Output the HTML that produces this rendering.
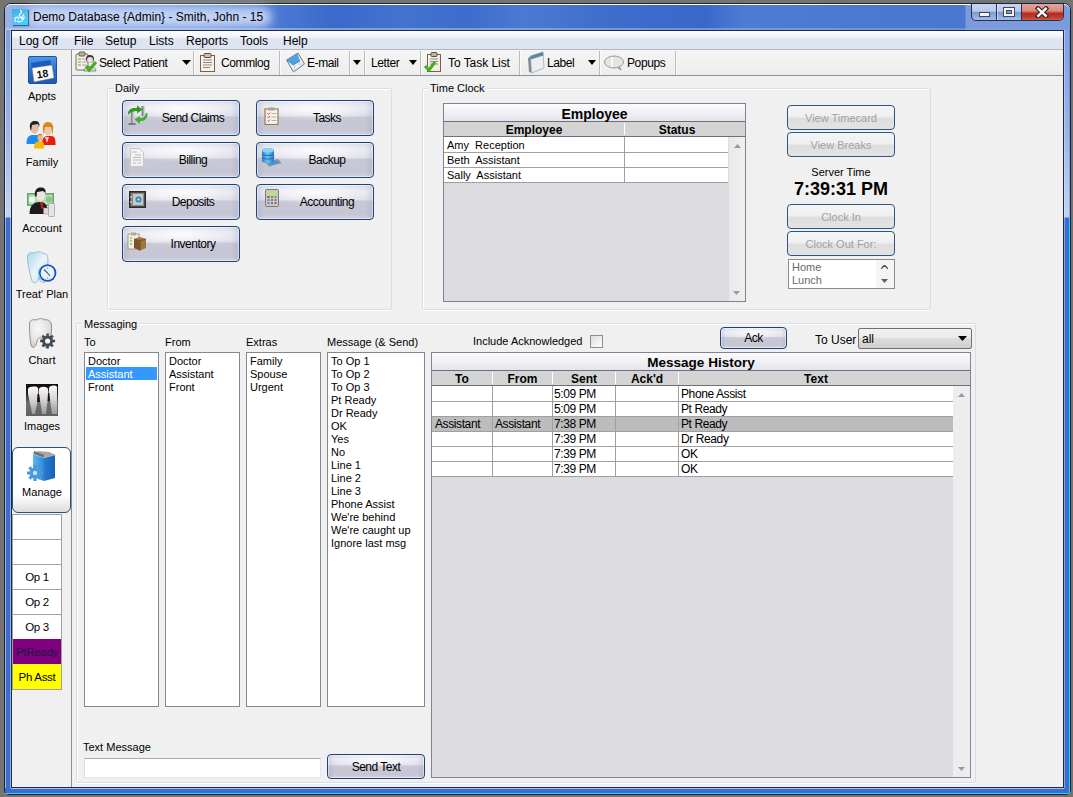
<!DOCTYPE html>
<html><head><meta charset="utf-8">
<style>
*{box-sizing:border-box;margin:0;padding:0}
html,body{width:1073px;height:797px;overflow:hidden}
body{background:#747472;font-family:"Liberation Sans",sans-serif;font-size:11px;color:#000;position:relative}
.a{position:absolute}
.t{position:absolute;white-space:nowrap;line-height:13px}
#outer{left:4px;top:3px;width:1067px;height:792px;border-radius:7px 7px 4px 4px;background:linear-gradient(90deg,#9bb5e6 0,#7d9ee0 25%,#4272d3 35%,#3f6dcf 60%,#5585da 80%,#6f98e0 100%);border:1px solid #1a2540}
#client{left:11px;top:30px;width:1053px;height:758px;background:#f0f0f0;border:1px solid #1e2b45}
.menu{left:12px;top:31px;width:1051px;height:19px;background:linear-gradient(#fbfcfe 0,#f3f5fa 30%,#dfe5f1 45%,#dde3f0 100%);border-bottom:1px solid #b4b8c2}
.menu span{position:absolute;top:3px;font-size:12px;line-height:15px}
.tb{left:72px;top:50px;width:991px;height:26px;background:linear-gradient(#f6f5f5,#eeeded);border-bottom:1px solid #8a8e96}
.tbsep{position:absolute;top:51px;width:2px;height:24px;background:linear-gradient(90deg,#bcbcbc 50%,#fafafa 50%)}
.tbt{position:absolute;top:56px;font-size:12px;letter-spacing:-.4px;line-height:14px}
.sb{left:12px;top:50px;width:60px;height:737px;background:#f0f0f0;border-right:1px solid #8f8f8f}
.sbl{position:absolute;width:60px;text-align:center;font-size:11px;line-height:13px;left:12px}
.gb{position:absolute;border:1px solid #d5dfe5;border-radius:2px;box-shadow:inset 1px 1px 0 #fff,0 1px 0 #fff}
.gbt{position:absolute;background:#f0f0f0;padding:0 2px;font-size:11px;line-height:13px}
.btn{position:absolute;border:1px solid #1c4478;border-radius:4px;background:radial-gradient(ellipse 55% 35% at 50% 22%,rgba(255,255,255,.9),rgba(255,255,255,0) 100%),linear-gradient(90deg,rgba(140,140,170,.22) 0,rgba(0,0,0,0) 7%,rgba(0,0,0,0) 93%,rgba(140,140,170,.22) 100%),linear-gradient(#d8d8e6 0,#e4e4ee 18%,#dedeea 44%,#c8c8d6 47%,#c5c5d3 85%,#d2d2e0 100%);box-shadow:inset 0 0 0 1px rgba(255,255,255,.45);font-size:12px;letter-spacing:-.5px;line-height:14px;text-align:center}
.btn2{position:absolute;border:1px solid #2f5583;border-radius:4px;background:linear-gradient(#f4f4f4 0,#f0f0f0 45%,#dedede 55%,#e3e3e3 100%);font-size:11px;line-height:14px;text-align:center;color:#a2a2a2}
.lb{position:absolute;background:#fff;border:1px solid #828790}
.lb div{height:13px;line-height:14px;padding-left:3px;font-size:11px;white-space:nowrap}
.bt{position:absolute;left:24px;right:0;top:10px;font-size:12px;letter-spacing:-.5px;text-align:center;white-space:nowrap}
.bt2{position:absolute;left:0;right:0;top:5px;text-align:center;white-space:nowrap}
</style></head><body>
<div class="a" style="left:4px;top:3px;width:1067px;height:792px;border-radius:7px 7px 5px 5px;background:linear-gradient(#88a4de 0,#86a2de 40px,#9ab2e4 120px,#c4d2f0 213px,#3d6ccc 214px,#3d6ccc 100%);border:1px solid #1a2238"></div>
<!-- title bar -->
<div class="a" style="left:5px;top:4px;width:1065px;height:26px;border-radius:6px 6px 0 0;border-top:1px solid #fbfdff;background:linear-gradient(90deg,#9cb2e4 0,#8eaae2 30px,#7096dc 200px,#4a78d2 275px,#3b69ca 330px,#4373cf 400px,#3d6ccc 460px,#4b79d2 520px,#3f6dcc 600px,#3a68c9 700px,#4e7cd3 740px,#4a78d0 900px,#4a78d0 960px,#7b9bdb 961px,#7b9bdb 100%)"></div>
<div class="a" style="left:5px;top:28px;width:1065px;height:2px;background:linear-gradient(90deg,rgba(190,210,245,.6),rgba(120,160,230,.6))"></div>
<div class="a" style="left:26px;top:7px;width:246px;height:20px;border-radius:10px;background:rgba(206,220,248,.88);filter:blur(5px)"></div>
<!-- side frames -->
<div class="a" style="left:5px;top:30px;width:1px;height:758px;background:rgba(255,255,255,.5)"></div>
<div class="a" style="left:1069px;top:30px;width:1px;height:188px;background:linear-gradient(#5a8ae8,#8ab0f0)"></div><div class="a" style="left:1069px;top:218px;width:1px;height:575px;background:#2ad0ff"></div><div class="a" style="left:10px;top:30px;width:1px;height:758px;background:rgba(220,235,255,.55)"></div><div class="a" style="left:1064px;top:30px;width:1px;height:758px;background:rgba(220,235,255,.45)"></div>
<div class="a" style="left:5px;top:793px;width:1064px;height:1px;background:#2ad0ff"></div>
<div class="a" style="left:11px;top:788px;width:1053px;height:1px;background:#a8c0ee"></div>
<!-- title icon -->
<div class="a" style="left:12px;top:9px;width:16px;height:16px;background:linear-gradient(160deg,#3aa8e8 0,#58c4f0 50%,#30d8f8 100%);box-shadow:1px 1px 1px rgba(0,0,40,.5)"></div>
<svg class="a" style="left:12px;top:9px" width="16" height="16" viewBox="0 0 16 16"><path d="M4 13 C2 10 3 8 5 8 L7 10 M8 1 C10 2 10 4 8 5 M8 5 C6 7 8 9 10 8 L12 5 M5 12 C8 14 11 12 12 9 M9 10 L13 8" stroke="#fff" stroke-width="1.1" fill="none"/></svg>
<div class="t" style="left:33px;top:10px;font-size:12px;line-height:15px;color:#000">Demo Database {Admin} - Smith, John - 15</div>
<!-- caption buttons -->
<div class="a" style="left:971px;top:4px;width:93px;height:17px;border:1px solid #243250;border-top:none;border-radius:0 0 5px 5px;overflow:hidden;background:linear-gradient(#c8d5ef 0,#b8c9ec 45%,#7f9ad4 52%,#8fa8dc 75%,#a8bce6 100%)">
 <div class="a" style="left:24px;top:0;width:1px;height:17px;background:#243250"></div>
 <div class="a" style="left:25px;top:0;width:1px;height:17px;background:rgba(255,255,255,.5)"></div>
 <div class="a" style="left:49px;top:0;width:1px;height:17px;background:#243250"></div>
 <div class="a" style="left:50px;top:0;width:43px;height:17px;background:linear-gradient(#e4a49a 0,#d88c80 40%,#b82c1c 55%,#c04030 80%,#d06a58 100%)"><svg class="a" style="left:13px;top:2px" width="14" height="12" viewBox="0 0 14 12"><path d="M3 2.5 L11 10 M11 2.5 L3 10" stroke="#402828" stroke-width="4.6" stroke-linecap="square"/><path d="M3.3 2.8 L10.7 9.7 M10.7 2.8 L3.3 9.7" stroke="#fafafa" stroke-width="2.4" stroke-linecap="square"/></svg></div>
 <div class="a" style="left:7px;top:8px;width:11px;height:5px;background:#f6f2ee;border:1px solid #404860"></div>
 <div class="a" style="left:31px;top:3px;width:12px;height:10px;border:1px solid #404860;background:#f6f2ee"></div>
 <div class="a" style="left:34px;top:6px;width:6px;height:4px;border:1px solid #404860;background:#7f9ad4"></div>
 </div>
<div id="client" class="a"></div>
<div class="a menu">
<span style="left:7px">Log Off</span>
<span style="left:62px">File</span>
<span style="left:93px">Setup</span>
<span style="left:137px">Lists</span>
<span style="left:174px">Reports</span>
<span style="left:228px">Tools</span>
<span style="left:271px">Help</span>
</div>
<div class="a sb"></div>
<div class="a tb"></div>
<!-- toolbar items -->
<svg class="a" style="left:75px;top:51px" width="22" height="22" viewBox="0 0 22 22">
 <rect x="1" y="3" width="12" height="16" rx="1" fill="#f4efe6" stroke="#7a6a58"/>
 <rect x="4" y="1" width="6" height="4" rx="1" fill="#b8b0a0" stroke="#6a6050"/>
 <path d="M3 8h3M3 11h3M3 14h3" stroke="#58b050" stroke-width="1.2"/>
 <path d="M7 8h4M7 11h4M7 14h4" stroke="#a8a8a8"/>
 <circle cx="15" cy="8" r="4" fill="#3a3a3a"/><circle cx="15" cy="9" r="3" fill="#e8e0d8"/>
 <path d="M9 20 C9 14 21 14 21 20Z" fill="#d8d8d8" stroke="#555" stroke-width=".6"/>
 <path d="M11 15 L14 19 L21 11" stroke="#40b020" stroke-width="3" fill="none"/>
</svg>
<div class="tbt" style="left:99px">Select Patient</div>
<svg class="a" style="left:182px;top:60px" width="9" height="5"><path d="M0 0h9L4.5 5z" fill="#000"/></svg>
<div class="tbsep" style="left:193px"></div>
<svg class="a" style="left:199px;top:52px" width="18" height="21" viewBox="0 0 18 21">
 <rect x="1.5" y="3.5" width="14" height="16" fill="#f6f2ea" stroke="#7a6040"/>
 <rect x="5" y="1.5" width="7" height="4" rx="1" fill="#c8c0b0" stroke="#605040"/>
 <path d="M4 8h9M4 10.5h9M4 13h9M4 15.5h7" stroke="#8a8a8a"/>
</svg>
<div class="tbt" style="left:221px">Commlog</div>
<div class="tbsep" style="left:279px"></div>
<svg class="a" style="left:285px;top:52px" width="21" height="21" viewBox="0 0 21 21">
 <path d="M1.5 8 L13 1 L19.5 12 L8.5 20Z" fill="#eef0f2" stroke="#707880"/>
 <path d="M2 8 L12.5 1.5 L15 9 L8 13Z" fill="#4aa4e4"/>
 <path d="M2 8 L8 13 L15 9" stroke="#3a7ab0" fill="none" stroke-width=".8"/>
 <path d="M8.5 20 L10 13 M19.5 12 L13 12" stroke="#b8c0c8" fill="none" stroke-width=".8"/>
</svg>
<div class="tbt" style="left:307px">E-mail</div>
<div class="tbsep" style="left:349px"></div>
<svg class="a" style="left:353px;top:60px" width="8" height="5"><path d="M0 0h8L4 5z" fill="#000"/></svg>
<div class="tbsep" style="left:364px"></div>
<div class="tbt" style="left:371px">Letter</div>
<svg class="a" style="left:409px;top:60px" width="8" height="5"><path d="M0 0h8L4 5z" fill="#000"/></svg>
<div class="tbsep" style="left:420px"></div>
<svg class="a" style="left:423px;top:51px" width="21" height="22" viewBox="0 0 21 22">
 <rect x="4.5" y="3.5" width="13" height="17" fill="#f2eee4" stroke="#7a6040"/>
 <rect x="8" y="1.5" width="6" height="4" rx="1" fill="#c0b8a8" stroke="#605040"/>
 <path d="M7 8h8M7 10.5h8M7 13h8" stroke="#909090"/>
 <path d="M2 15 L6 19 L12 11" stroke="#40b020" stroke-width="3" fill="none"/>
</svg>
<div class="tbt" style="left:448px;letter-spacing:-.05px">To Task List</div>
<div class="tbsep" style="left:519px"></div>
<svg class="a" style="left:527px;top:51px" width="18" height="23" viewBox="0 0 18 23">
 <path d="M1 7 L4 5 L5 22 L2 21Z" fill="#808890"/>
 <path d="M3.5 5 L16 1 L17 17 L4.5 22Z" fill="#eceef0" stroke="#9aa0a8" stroke-width=".7"/>
 <path d="M3.5 5 L16 1 L16.3 4.5 L3.8 8.5Z" fill="#5a86a8"/>
</svg>
<div class="tbt" style="left:547px">Label</div>
<svg class="a" style="left:588px;top:60px" width="8" height="5"><path d="M0 0h8L4 5z" fill="#000"/></svg>
<div class="tbsep" style="left:599px"></div>
<svg class="a" style="left:603px;top:55px" width="22" height="17" viewBox="0 0 22 17">
 <ellipse cx="11" cy="7" rx="9.5" ry="6" fill="#e4e4e4" stroke="#9a9a9a"/>
 <path d="M14 12 L18 15 L16 11" fill="#e4e4e4" stroke="#8a8a8a"/>
 <path d="M9 2 v10" stroke="#fff" stroke-width="1.5"/>
</svg>
<div class="tbt" style="left:627px">Popups</div>
<div class="tbsep" style="left:675px"></div>
<!-- sidebar -->
<svg class="a" style="left:28px;top:56px" width="29" height="28" viewBox="0 0 29 28">
 <defs><linearGradient id="cal" x1="0" y1="0" x2="0" y2="1"><stop offset="0" stop-color="#4c9ae8"/><stop offset=".5" stop-color="#2a72d0"/><stop offset="1" stop-color="#1c58b0"/></linearGradient></defs>
 <rect x=".5" y=".5" width="28" height="27" rx="1.5" fill="url(#cal)" stroke="#1e50a0"/>
 <path d="M3 7 L22 4 L24 11 L4 14Z" fill="#1a5cc4"/>
 <path d="M4 12 L24 9 L26 22 L6 26Z" fill="#fbfbfb" stroke="#707070" stroke-width=".5"/>
 <text x="8.5" y="21.5" font-family="Liberation Sans" font-weight="bold" font-size="10.5" fill="#111" transform="rotate(-9 15 17)">18</text>
</svg>
<div class="sbl" style="top:90px">Appts</div>
<svg class="a" style="left:26px;top:120px" width="32" height="30" viewBox="0 0 32 30">
 <path d="M0.5 24 C0.5 17 3 15 7 15 L11 15 C14 15 13 19 13 24Z" fill="#1a8cf0"/>
 <ellipse cx="8.5" cy="8" rx="4.3" ry="5.8" fill="#e4bca4"/>
 <path d="M4 8 C3 2 7 0.5 10 1 C13 1.5 14 4 13 7 L12 4 L6 5 L5 11Z" fill="#202020"/>
 <path d="M16 25 C16 18 18 16 22 16 L25 16 C29 16 29.5 19 29.5 25Z" fill="#e81c10"/>
 <path d="M19 17 L21 23 L23 17Z" fill="#fff" opacity=".8"/>
 <ellipse cx="22" cy="10" rx="4" ry="5.2" fill="#ecc8ac"/>
 <path d="M17 11 C16 4 19 2 22 2 C26 2 28 5 27 10 L27 16 L25 7 L19 7 L18 15Z" fill="#d88a18"/>
 <path d="M8 28.5 C8 23 10 21.5 13 21.5 L15 21.5 C18 21.5 18 24 18 28.5Z" fill="#f8b800"/>
 <ellipse cx="14" cy="17.5" rx="2.5" ry="3.5" fill="#e8b890"/>
 <path d="M11.5 17 C11 13 17 13 16.5 17 L15.5 15 L12.5 15Z" fill="#a05a10"/>
</svg>
<div class="sbl" style="top:156px">Family</div>
<svg class="a" style="left:26px;top:186px" width="30" height="32" viewBox="0 0 30 32">
 <rect x="1" y="7" width="27" height="13" fill="#62a862"/>
 <rect x="2.5" y="8.5" width="24" height="10" fill="#b4dab4"/>
 <circle cx="6" cy="13.5" r="3" fill="#f4fbf4"/><circle cx="23" cy="13.5" r="3" fill="#8cc48c"/>
 <path d="M3.5 28 C3.5 19 8 16 14 16 C19 16 22 19 22 28Z" fill="#1c1c1c"/>
 <ellipse cx="14.5" cy="9" rx="4.8" ry="6" fill="#ece6e0"/>
 <path d="M9 10 C8 3 12 1.5 15 1.5 C19 1.5 20 4 19.5 7 L17 5 L11 6 L10.5 11Z" fill="#1a1a1a"/>
 <path d="M14 16 L16.5 16 L17.5 22 L15.5 23Z" fill="#d81818"/>
 <rect x="17.5" y="22" width="5" height="6" fill="#e0d8d0" stroke="#8a8070" stroke-width=".5"/>
 <rect x="22.5" y="17.5" width="6" height="13" rx="1" fill="#e4e4e4" stroke="#9a9a9a" stroke-width=".7"/>
</svg>
<div class="sbl" style="top:222px">Account</div>
<svg class="a" style="left:25px;top:250px" width="34" height="36" viewBox="0 0 34 36">
 <defs><linearGradient id="tth" x1="0" y1="0" x2="1" y2="1"><stop offset="0" stop-color="#a8d8ec"/><stop offset=".5" stop-color="#e8f4f8"/><stop offset="1" stop-color="#c8e4ee"/></linearGradient></defs>
 <path d="M2.5 8 C2 3 6 2 10 3 C13 1 16 1.5 18 3.5 C21 3 23 5 23 10 C23 17 22 24 21 31 C19 34 15 33 14 27 C13 33 9 34 7 31 C5 24 3 16 2.5 8Z" fill="url(#tth)" stroke="#88b4c4" stroke-width=".8"/>
 <circle cx="22.6" cy="23" r="8.8" fill="#2050c0"/>
 <circle cx="22.6" cy="23" r="9" fill="none" stroke="#40c8e8" stroke-width="1" stroke-dasharray="14 60" stroke-dashoffset="-20"/>
 <circle cx="22.6" cy="23" r="7" fill="#e4f4fc"/>
 <path d="M22.6 23 L19 19.5 M22.6 23 L25 26" stroke="#505870" stroke-width="1.1"/>
 <circle cx="22.6" cy="18" r=".6" fill="#c04060"/><circle cx="22.6" cy="28" r=".6" fill="#c04060"/>
</svg>
<div class="sbl" style="top:288px">Treat' Plan</div>
<svg class="a" style="left:28px;top:317px" width="28" height="32" viewBox="0 0 28 32">
 <defs><radialGradient id="tch" cx=".4" cy=".35" r=".7"><stop offset="0" stop-color="#f8f8f8"/><stop offset=".7" stop-color="#e4e0e0"/><stop offset="1" stop-color="#c8c4c4"/></radialGradient></defs>
 <path d="M1.5 8 C1 3 5 2 8 3 C11 1.5 14 0.8 17 3 C20 2 23.5 4 23.5 9 C24 16 22 23 21 29 C19 32 16 31 15 25 C14 20 11 19 9 24 C8 31 4 32 3 28 C2 22 1.5 15 1.5 8Z" fill="url(#tch)" stroke="#7a7a7a" stroke-width=".8"/>
 <g transform="translate(19.6 24)"><circle r="5.6" fill="#505860"/>
 <path d="M0 -7.5V7.5M-7.5 0H7.5M-5.3 -5.3L5.3 5.3M5.3 -5.3L-5.3 5.3" stroke="#404850" stroke-width="2.4"/>
 <circle r="2.6" fill="#f4f4f4"/></g>
</svg>
<div class="sbl" style="top:354px">Chart</div>
<svg class="a" style="left:26px;top:384px" width="32" height="32" viewBox="0 0 32 32">
 <defs><linearGradient id="xr" x1="0" y1="0" x2="0" y2="1"><stop offset="0" stop-color="#120a0a"/><stop offset=".3" stop-color="#282020"/><stop offset=".6" stop-color="#707070"/><stop offset="1" stop-color="#606060"/></linearGradient>
 <linearGradient id="xt" x1="0" y1="0" x2="0" y2="1"><stop offset="0" stop-color="#fafafa"/><stop offset=".45" stop-color="#d8d8d8"/><stop offset="1" stop-color="#9a9a9a"/></linearGradient></defs>
 <rect width="32" height="32" fill="url(#xr)"/>
 <path d="M2 5 C3 2 11 2 12 4 C13 9 12 14 11 20 L9 30 L6 30 C5 22 3 16 2 10Z" fill="url(#xt)"/>
 <path d="M13 5 C14 2 21 2 22 5 C23 10 22 15 21 21 L20 30 L16 30 C15 22 14 16 13 10Z" fill="url(#xt)"/>
 <path d="M23 4 C24 1 30 1 31 3 L31 30 L26 30 C25 22 24 16 23 10Z" fill="url(#xt)"/>
 <path d="M11.5 10 L13 10 L14 18 L11 18Z M22 9 L23.3 9 L24 17 L21.5 17Z" fill="#1a1414"/>
</svg>
<div class="sbl" style="top:420px">Images</div>
<div class="a" style="left:12px;top:447px;width:59px;height:66px;border:1px solid #2b5080;border-radius:6px;background:linear-gradient(#fff 0,#fff 72%,#f4f4f4 82%,#dcdcdc 100%)"></div>
<svg class="a" style="left:26px;top:450px" width="32" height="33" viewBox="0 0 32 33">
 <defs><linearGradient id="mg1" x1="0" x2="1"><stop offset="0" stop-color="#60b8f0"/><stop offset="1" stop-color="#2a88d8"/></linearGradient>
 <linearGradient id="mg2" x1="0" x2="1"><stop offset="0" stop-color="#2a7ad0"/><stop offset="1" stop-color="#1a60b0"/></linearGradient></defs>
 <path d="M7 4 L18 8 L18 31 L7 27Z" fill="url(#mg1)"/>
 <path d="M18 8 L29 5 L29 28 L18 31Z" fill="url(#mg2)"/>
 <path d="M6 3 L12 1 L23 2 L30 5 L18 8Z" fill="#a8a8a8"/>
 <path d="M8 1 L8 4 L18 7.5 L18 5Z" fill="#707070"/>
 <g transform="translate(9 23)"><circle r="5.5" fill="#58a8e8"/>
 <path d="M0 -8V8M-8 0H8M-5.6 -5.6L5.6 5.6M5.6 -5.6L-5.6 5.6" stroke="#4a98dc" stroke-width="3"/>
 <circle r="2.2" fill="#c8e4f8"/></g>
</svg>
<div class="sbl" style="top:486px">Manage</div>
<!-- op list -->
<div class="a" style="left:12px;top:514px;width:50px;height:176px;background:#fff;border:1px solid #a0a0a0;border-top:1px solid #a0a0a0"></div>
<div class="a" style="left:13px;top:539px;width:48px;height:1px;background:#a0a0a0"></div>
<div class="a" style="left:13px;top:564px;width:48px;height:1px;background:#a0a0a0"></div>
<div class="a" style="left:13px;top:589px;width:48px;height:1px;background:#a0a0a0"></div>
<div class="a" style="left:13px;top:614px;width:48px;height:1px;background:#a0a0a0"></div>
<div class="a" style="left:13px;top:639px;width:48px;height:25px;background:#800080"></div>
<div class="a" style="left:13px;top:664px;width:48px;height:25px;background:#ffff00"></div>
<div class="sbl" style="left:12px;width:50px;top:571px;font-size:11.5px;letter-spacing:-.3px">Op 1</div>
<div class="sbl" style="left:12px;width:50px;top:596px;font-size:11.5px;letter-spacing:-.3px">Op 2</div>
<div class="sbl" style="left:12px;width:50px;top:621px;font-size:11.5px;letter-spacing:-.3px">Op 3</div>
<div class="sbl" style="left:12px;width:50px;top:646px;font-size:11.5px;letter-spacing:-.3px;color:#1a1a40">PtReady</div>
<div class="sbl" style="left:12px;width:50px;top:671px;font-size:11.5px;letter-spacing:-.3px">Ph Asst</div>
<!-- Daily -->
<div class="gb" style="left:107px;top:88px;width:285px;height:222px"></div>
<div class="gbt" style="left:113px;top:82px">Daily</div>
<div class="btn" style="left:122px;top:100px;width:118px;height:36px"><span class="bt">Send Claims</span></div>
<div class="btn" style="left:256px;top:100px;width:118px;height:36px"><span class="bt">Tasks</span></div>
<div class="btn" style="left:122px;top:142px;width:118px;height:36px"><span class="bt">Billing</span></div>
<div class="btn" style="left:256px;top:142px;width:118px;height:36px"><span class="bt">Backup</span></div>
<div class="btn" style="left:122px;top:184px;width:118px;height:36px"><span class="bt">Deposits</span></div>
<div class="btn" style="left:256px;top:184px;width:118px;height:36px"><span class="bt">Accounting</span></div>
<div class="btn" style="left:122px;top:226px;width:118px;height:36px"><span class="bt">Inventory</span></div>
<!-- button icons -->
<svg class="a" style="left:127px;top:105px" width="22" height="20" viewBox="0 0 22 20">
 <rect x="3" y="6" width="4" height="13" fill="#c8c8cc"/><rect x="4" y="6" width="1.5" height="13" fill="#8a8a90"/>
 <rect x="1.5" y="18" width="7" height="2" fill="#7a7a80"/>
 <rect x="14" y="1" width="3.5" height="10" fill="#b8b8c0"/><rect x="15" y="1" width="1.2" height="10" fill="#808088"/>
 <path d="M1 9 C1 4 5 2.5 10 3 L10 0.5 L15.5 4.5 L10 8.5 L10 6 C6 6 3.5 7 1 10Z" fill="#2e9a1e"/>
 <path d="M20.5 8 C21 13 18 16.5 13 16 L13 19 L7.5 14.5 L13 11 L13 13 C16 13 18 12 19 8Z" fill="#40b030"/>
</svg>
<svg class="a" style="left:264px;top:107px" width="15" height="18" viewBox="0 0 15 18">
 <rect x="1" y="2" width="13" height="15.5" fill="#f6f2e8" stroke="#9a7a50" stroke-width="1.2"/>
 <rect x="4.5" y="0.5" width="6" height="3" fill="#a8a098"/>
 <path d="M3.5 6.5l1 1 1.5-2M3.5 10l1 1 1.5-2M3.5 13.5l1 1 1.5-2" stroke="#d04040" stroke-width=".9" fill="none"/>
 <path d="M7.5 6.5h5M7.5 10h5M7.5 13.5h5" stroke="#a0a0a0" stroke-width=".8"/>
</svg>
<svg class="a" style="left:130px;top:148px" width="14" height="19" viewBox="0 0 14 19">
 <path d="M.5 .5 h9 l4 4 v14 h-13z" fill="#f2f2f2" stroke="#c8c8c8"/>
 <path d="M2.5 4h4M5 7h6M3 9.5h8M3 12h8M3 15h3M8 15h3" stroke="#b0b0b0" stroke-width=".8"/>
</svg>
<svg class="a" style="left:261px;top:147px" width="21" height="20" viewBox="0 0 21 20">
 <defs><linearGradient id="db" x1="0" x2="1"><stop offset="0" stop-color="#2a80d0"/><stop offset=".45" stop-color="#6cc4f4"/><stop offset="1" stop-color="#2a78c8"/></linearGradient></defs>
 <path d="M4 15 L17 12 L20.5 16 L8 19.5Z" fill="#8890a0"/><path d="M8 16 L16 14 L18 16 L10 18Z" fill="#3a9ae0"/>
 <path d="M1 3.5 C1 0.5 13 0.5 13 3.5 V14 C13 17 1 17 1 14Z" fill="url(#db)"/>
 <ellipse cx="7" cy="3.5" rx="6" ry="2.2" fill="#8ad4f8"/>
 <path d="M1 7 C1 9 13 9 13 7 M1 10.5 C1 12.5 13 12.5 13 10.5" stroke="#1a5aa8" stroke-width=".8" fill="none"/>
</svg>
<svg class="a" style="left:129px;top:191px" width="17" height="17" viewBox="0 0 17 17">
 <rect x=".5" y=".5" width="16" height="16" fill="#4a4a4a" stroke="#2a2a2a"/>
 <rect x="2" y="2" width="13" height="13" fill="#8a8a88"/>
 <rect x="4" y="3" width="10" height="11" fill="#c8c8c0"/>
 <circle cx="9.5" cy="8.5" r="3" fill="#2a8ab8"/><circle cx="9.5" cy="8.5" r="1.2" fill="#a8e0f8"/>
 <path d="M2 5v2M2 10v2" stroke="#e0e0e0" stroke-width="1.2"/>
</svg>
<svg class="a" style="left:265px;top:189px" width="14" height="18" viewBox="0 0 14 18">
 <rect x=".5" y=".5" width="13" height="17" rx="1" fill="#c8c8c8" stroke="#7a7a7a"/>
 <rect x="2" y="2" width="10" height="3.5" fill="#b8e080"/>
 <path d="M2.5 8h2M6 8h2M9.5 8h2M2.5 11h2M6 11h2M9.5 11h2M2.5 14h2M6 14h2" stroke="#6a6a6a" stroke-width="1.6"/>
 <path d="M9.5 14h2" stroke="#d03030" stroke-width="1.6"/><path d="M2.5 8h2" stroke="#c04040" stroke-width="1.6"/>
</svg>
<svg class="a" style="left:127px;top:232px" width="20" height="19" viewBox="0 0 20 19">
 <rect x="1" y="2" width="11" height="15" fill="#f2eee4" stroke="#9a8a70" stroke-width=".8"/>
 <rect x="4" y=".5" width="5" height="3" fill="#b0a898"/>
 <path d="M3 6h2M3 9h2M3 12h2" stroke="#40a040" stroke-width=".9"/>
 <path d="M7 7 L13 5 L19 7 L19 16 L13 18.5 L7 16Z" fill="#a07440"/>
 <path d="M7 7 L13 9 L19 7 M13 9 V18.5" stroke="#6a4a20" stroke-width=".8" fill="none"/>
 <path d="M7 7 L13 9 V18.5 L7 16Z" fill="#7a5428"/>
</svg>
<!-- Time Clock -->
<div class="gb" style="left:422px;top:88px;width:509px;height:222px"></div>
<div class="gbt" style="left:428px;top:82px">Time Clock</div>
<div class="a" style="left:443px;top:103px;width:303px;height:199px;background:#dcdce0;border:1px solid #828294"></div>
<div class="a" style="left:444px;top:104px;width:301px;height:18px;background:linear-gradient(#fcfcfe,#e4e4ec);border-bottom:1px solid #6e6e80"></div>
<div class="t" style="left:444px;top:106px;width:301px;text-align:center;font-size:14px;font-weight:bold;line-height:16px">Employee</div>
<div class="a" style="left:444px;top:122px;width:301px;height:15px;background:#d4d4d4;border-bottom:1px solid #6e6e80"></div>
<div class="a" style="left:624px;top:123px;width:1px;height:12px;background:#8a8a8a;border-right:1px solid #fff"></div>
<div class="t" style="left:444px;top:124px;width:180px;text-align:center;font-size:12px;font-weight:bold">Employee</div>
<div class="t" style="left:626px;top:124px;width:102px;text-align:center;font-size:12px;font-weight:bold">Status</div>
<div class="a" style="left:444px;top:137px;width:284px;height:46px;background:#fff"></div>
<div class="a" style="left:444px;top:152px;width:284px;height:1px;background:#a0a0a0"></div>
<div class="a" style="left:444px;top:167px;width:284px;height:1px;background:#a0a0a0"></div>
<div class="a" style="left:444px;top:182px;width:284px;height:1px;background:#a0a0a0"></div>
<div class="a" style="left:624px;top:137px;width:1px;height:45px;background:#a0a0a0"></div>
<div class="a" style="left:729px;top:137px;width:16px;height:164px;background:linear-gradient(90deg,#e8e8e8,#f0f0f0)"></div>
<svg class="a" style="left:734px;top:144px" width="7" height="4"><path d="M0 4h7L3.5 0z" fill="#9a9a9a"/></svg>
<svg class="a" style="left:733px;top:291px" width="7" height="4"><path d="M0 0h7L3.5 4z" fill="#9a9a9a"/></svg>
<div class="t" style="left:447px;top:139px;white-space:pre">Amy  Reception</div>
<div class="t" style="left:447px;top:154px;white-space:pre">Beth  Assistant</div>
<div class="t" style="left:447px;top:169px;white-space:pre">Sally  Assistant</div>
<div class="btn2" style="left:787px;top:105px;width:108px;height:25px"><span class="bt2">View Timecard</span></div>
<div class="btn2" style="left:787px;top:132px;width:108px;height:25px"><span class="bt2">View Breaks</span></div>
<div class="t" style="left:787px;top:166px;width:108px;text-align:center;font-size:11px">Server Time</div>
<div class="t" style="left:770px;top:180px;width:142px;text-align:center;font-size:18px;font-weight:bold;line-height:19px">7:39:31 PM</div>
<div class="btn2" style="left:787px;top:204px;width:108px;height:25px"><span class="bt2">Clock In</span></div>
<div class="btn2" style="left:787px;top:231px;width:108px;height:25px"><span class="bt2">Clock Out For:</span></div>
<div class="a" style="left:788px;top:259px;width:107px;height:30px;background:#fff;border:1px solid #8c8c8c"></div>
<div class="a" style="left:876px;top:260px;width:18px;height:28px;background:#f4f4f4"></div>
<svg class="a" style="left:881px;top:265px" width="7" height="4"><path d="M0 4L3.5 0L7 4" stroke="#505050" stroke-width="1.3" fill="none"/></svg>
<svg class="a" style="left:881px;top:279px" width="7" height="4"><path d="M0 0h7L3.5 4z" fill="#606060"/></svg>
<div class="t" style="left:792px;top:261px;color:#6a6a6a;font-size:11px;line-height:13px">Home<br>Lunch</div>
<!-- Messaging -->
<div class="gb" style="left:76px;top:323px;width:900px;height:460px"></div>
<div class="gbt" style="left:82px;top:318px">Messaging</div>
<div class="t" style="left:84px;top:336px">To</div>
<div class="t" style="left:165px;top:336px">From</div>
<div class="t" style="left:246px;top:336px">Extras</div>
<div class="t" style="left:327px;top:336px">Message (&amp; Send)</div>
<div class="lb" style="left:84px;top:352px;width:75px;height:355px;padding-top:1px">
 <div>Doctor</div><div style="background:#3399ff;color:#fff;margin:0 1px;padding-left:2px">Assistant</div><div>Front</div>
</div>
<div class="lb" style="left:165px;top:352px;width:75px;height:355px;padding-top:1px">
 <div>Doctor</div><div>Assistant</div><div>Front</div>
</div>
<div class="lb" style="left:246px;top:352px;width:75px;height:355px;padding-top:1px">
 <div>Family</div><div>Spouse</div><div>Urgent</div>
</div>
<div class="lb" style="left:327px;top:352px;width:98px;height:355px;padding-top:1px">
 <div>To Op 1</div><div>To Op 2</div><div>To Op 3</div><div>Pt Ready</div><div>Dr Ready</div><div>OK</div><div>Yes</div><div>No</div><div>Line 1</div><div>Line 2</div><div>Line 3</div><div>Phone Assist</div><div>We're behind</div><div>We're caught up</div><div>Ignore last msg</div>
</div>
<div class="t" style="left:473px;top:335px">Include Acknowledged</div>
<div class="a" style="left:590px;top:335px;width:13px;height:13px;border:1px solid #8e8f8f;background:linear-gradient(135deg,#dcdcdc,#fdfdfd)"></div>
<div class="btn" style="left:720px;top:327px;width:67px;height:22px;padding-top:3px;font-size:12px">Ack</div>
<div class="t" style="left:815px;top:333px;font-size:12px;line-height:14px">To User</div>
<div class="a" style="left:858px;top:328px;width:114px;height:21px;border:1px solid #707070;border-radius:2px;background:linear-gradient(#f2f2f2 0,#ebebeb 45%,#dddddd 50%,#cfcfcf 100%)"></div>
<div class="t" style="left:862px;top:332px;font-size:12px;line-height:14px">all</div>
<svg class="a" style="left:958px;top:336px" width="9" height="5"><path d="M0 0h9L4.5 5z" fill="#000"/></svg>
<!-- message history grid -->
<div class="a" style="left:431px;top:352px;width:540px;height:426px;background:#dcdce0;border:1px solid #828294"></div>
<div class="a" style="left:432px;top:353px;width:538px;height:18px;background:linear-gradient(#fcfcfe,#e4e4ec);border-bottom:1px solid #6e6e80"></div>
<div class="t" style="left:432px;top:355px;width:538px;text-align:center;font-size:13.5px;font-weight:bold;line-height:16px">Message History</div>
<div class="a" style="left:432px;top:371px;width:538px;height:15px;background:#d4d4d4;border-bottom:1px solid #6e6e80"></div>
<div class="a" style="left:492px;top:372px;width:1px;height:12px;background:#8a8a8a;border-right:1px solid #fff"></div>
<div class="a" style="left:552px;top:372px;width:1px;height:12px;background:#8a8a8a;border-right:1px solid #fff"></div>
<div class="a" style="left:615px;top:372px;width:1px;height:12px;background:#8a8a8a;border-right:1px solid #fff"></div>
<div class="a" style="left:678px;top:372px;width:1px;height:12px;background:#8a8a8a;border-right:1px solid #fff"></div>
<div class="t" style="left:432px;top:373px;width:60px;text-align:center;font-size:12px;font-weight:bold">To</div>
<div class="t" style="left:493px;top:373px;width:59px;text-align:center;font-size:12px;font-weight:bold">From</div>
<div class="t" style="left:553px;top:373px;width:62px;text-align:center;font-size:12px;font-weight:bold">Sent</div>
<div class="t" style="left:616px;top:373px;width:62px;text-align:center;font-size:12px;font-weight:bold">Ack'd</div>
<div class="t" style="left:679px;top:373px;width:274px;text-align:center;font-size:12px;font-weight:bold">Text</div>
<div class="a" style="left:432px;top:386px;width:521px;height:91px;background:#fff"></div>
<div class="a" style="left:432px;top:416px;width:521px;height:15px;background:#bcbcbc"></div>
<div class="a" style="left:432px;top:401px;width:521px;height:1px;background:#a0a0a0"></div>
<div class="a" style="left:432px;top:416px;width:521px;height:1px;background:#a0a0a0"></div>
<div class="a" style="left:432px;top:431px;width:521px;height:1px;background:#a0a0a0"></div>
<div class="a" style="left:432px;top:446px;width:521px;height:1px;background:#a0a0a0"></div>
<div class="a" style="left:432px;top:461px;width:521px;height:1px;background:#a0a0a0"></div>
<div class="a" style="left:432px;top:476px;width:521px;height:1px;background:#a0a0a0"></div>
<div class="a" style="left:492px;top:386px;width:1px;height:90px;background:#a0a0a0"></div>
<div class="a" style="left:552px;top:386px;width:1px;height:90px;background:#a0a0a0"></div>
<div class="a" style="left:615px;top:386px;width:1px;height:90px;background:#a0a0a0"></div>
<div class="a" style="left:678px;top:386px;width:1px;height:90px;background:#a0a0a0"></div>
<div class="a" style="left:953px;top:386px;width:17px;height:391px;background:#ededed"></div>
<svg class="a" style="left:958px;top:393px" width="7" height="4"><path d="M0 4h7L3.5 0z" fill="#9a9a9a"/></svg>
<svg class="a" style="left:958px;top:767px" width="7" height="4"><path d="M0 0h7L3.5 4z" fill="#9a9a9a"/></svg>
<div class="t" style="left:554px;top:388px;font-size:12px;letter-spacing:-.4px">5:09 PM</div><div class="t" style="left:681px;top:388px;font-size:12px;letter-spacing:-.4px">Phone Assist</div>
<div class="t" style="left:554px;top:403px;font-size:12px;letter-spacing:-.4px">5:09 PM</div><div class="t" style="left:681px;top:403px;font-size:12px;letter-spacing:-.4px">Pt Ready</div>
<div class="t" style="left:435px;top:418px;font-size:12px;letter-spacing:-.4px">Assistant</div><div class="t" style="left:495px;top:418px;font-size:12px;letter-spacing:-.4px">Assistant</div>
<div class="t" style="left:554px;top:418px;font-size:12px;letter-spacing:-.4px">7:38 PM</div><div class="t" style="left:681px;top:418px;font-size:12px;letter-spacing:-.4px">Pt Ready</div>
<div class="t" style="left:554px;top:433px;font-size:12px;letter-spacing:-.4px">7:39 PM</div><div class="t" style="left:681px;top:433px;font-size:12px;letter-spacing:-.4px">Dr Ready</div>
<div class="t" style="left:554px;top:448px;font-size:12px;letter-spacing:-.4px">7:39 PM</div><div class="t" style="left:681px;top:448px;font-size:12px;letter-spacing:-.4px">OK</div>
<div class="t" style="left:554px;top:463px;font-size:12px;letter-spacing:-.4px">7:39 PM</div><div class="t" style="left:681px;top:463px;font-size:12px;letter-spacing:-.4px">OK</div>
<!-- text message -->
<div class="t" style="left:83px;top:741px">Text Message</div>
<div class="a" style="left:84px;top:758px;width:237px;height:20px;background:#fff;border:1px solid #e3e6ec;border-top-color:#a8aab0;border-left-color:#dcdfe6"></div>
<div class="btn" style="left:327px;top:754px;width:98px;height:25px;padding-top:5px">Send Text</div>
</body></html>
